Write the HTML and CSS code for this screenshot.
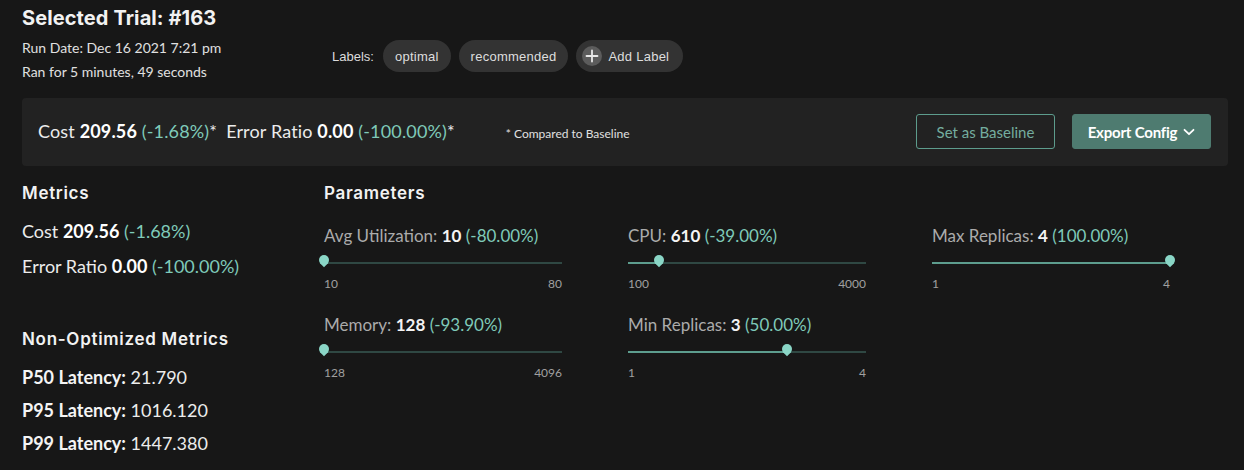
FILE: index.html
```html
<!DOCTYPE html>
<html lang="en">
<head>
<meta charset="utf-8">
<title>Selected Trial</title>
<link rel="stylesheet" href="styles.css">
</head>
<body>
<div class="page">
  <h1 class="title">Selected Trial: #163</h1>
  <div class="top-row">
    <div class="meta">
      <div class="meta-line">Run Date: Dec 16 2021 7:21 pm</div>
      <div class="meta-line">Ran for 5 minutes, 49 seconds</div>
    </div>
    <div class="labels">
      <span class="labels-title">Labels:</span>
      <span class="chip">optimal</span>
      <span class="chip">recommended</span>
      <span class="chip chip-add">
        <span class="plus"><svg width="20" height="20" viewBox="0 0 20 20"><circle cx="10" cy="10" r="10" fill="#5c5c5c"/><path d="M10 4.5v11M4.5 10h11" stroke="#e8e8e8" stroke-width="1.8" stroke-linecap="round"/></svg></span>
        Add Label
      </span>
    </div>
  </div>

  <section class="summary">
    <div class="summary-text">
      <span class="sum-item">Cost <b>209.56</b> <span class="pct">(-1.68%)</span>*</span>
      <span class="sum-item">Error Ratio <b>0.00</b> <span class="pct">(-100.00%)</span>*</span>
      <span class="note">* Compared to Baseline</span>
    </div>
    <div class="actions">
      <button class="btn btn-outline">Set as Baseline</button>
      <button class="btn btn-fill">Export Config <svg class="chev" width="12" height="8" viewBox="0 0 12 8"><path d="M1.5 1.8 6 6.2 10.5 1.8" fill="none" stroke="#fff" stroke-width="1.8" stroke-linecap="round" stroke-linejoin="round"/></svg></button>
    </div>
  </section>

  <div class="content">
    <div class="metrics-col">
      <h2 class="heading">Metrics</h2>
      <div class="metric first">Cost <b>209.56</b> <span class="pct">(-1.68%)</span></div>
      <div class="metric">Error Ratio <b>0.00</b> <span class="pct">(-100.00%)</span></div>

      <h2 class="heading nonopt">Non-Optimized Metrics</h2>
      <div class="lat first"><b>P50 Latency:</b> 21.790</div>
      <div class="lat"><b>P95 Latency:</b> 1016.120</div>
      <div class="lat"><b>P99 Latency:</b> 1447.380</div>
    </div>

    <div class="params-col">
      <h2 class="heading">Parameters</h2>
      <div class="param-grid">
        <div class="param">
          <div class="param-label">Avg Utilization: <span class="val">10</span> <span class="pct">(-80.00%)</span></div>
          <div class="slider"><div class="track"><div class="fill" style="width:0%"></div></div><span class="thumb" style="left:0%"></span></div>
          <div class="range"><span>10</span><span>80</span></div>
        </div>
        <div class="param">
          <div class="param-label">CPU: <span class="val">610</span> <span class="pct">(-39.00%)</span></div>
          <div class="slider"><div class="track"><div class="fill" style="width:13.08%"></div></div><span class="thumb" style="left:13.08%"></span></div>
          <div class="range"><span>100</span><span>4000</span></div>
        </div>
        <div class="param">
          <div class="param-label">Max Replicas: <span class="val">4</span> <span class="pct">(100.00%)</span></div>
          <div class="slider"><div class="track"><div class="fill" style="width:100%"></div></div><span class="thumb" style="left:100%"></span></div>
          <div class="range"><span>1</span><span>4</span></div>
        </div>
        <div class="param">
          <div class="param-label">Memory: <span class="val">128</span> <span class="pct">(-93.90%)</span></div>
          <div class="slider"><div class="track"><div class="fill" style="width:0%"></div></div><span class="thumb" style="left:0%"></span></div>
          <div class="range"><span>128</span><span>4096</span></div>
        </div>
        <div class="param">
          <div class="param-label">Min Replicas: <span class="val">3</span> <span class="pct">(50.00%)</span></div>
          <div class="slider"><div class="track"><div class="fill" style="width:66.67%"></div></div><span class="thumb" style="left:66.67%"></span></div>
          <div class="range"><span>1</span><span>4</span></div>
        </div>
      </div>
    </div>
  </div>
</div>
</body>
</html>
```

FILE: styles.css
```css
* { box-sizing: border-box; }
html, body { margin: 0; padding: 0; background: #171717; }
body {
  font-family: "Lato", "Liberation Sans", sans-serif;
  color: #e6e6e6;
  width: 1244px;
  height: 470px;
  overflow: hidden;
}
.page { padding: 6px 16px 0 22px; }

.title {
  margin: 0;
  font-family: "Inter", "Open Sans", sans-serif;
  font-weight: 700;
  font-size: 20px;
  line-height: 24px;
  color: #f2f2f2;
  letter-spacing: 0.1px;
}

.top-row { display: flex; align-items: flex-start; margin-top: 6px; }
.meta { width: 310px; flex-shrink: 0; }
.meta-line { font-size: 14px; line-height: 24px; color: #e0e0e0; }

.labels {
  display: flex;
  align-items: center;
  gap: 8px;
  margin-top: 4px;
  font-family: "Liberation Sans", Arial, sans-serif;
  font-size: 13px;
  color: #dcdcdc;
}
.labels-title { margin-right: 1px; }
.chip {
  display: inline-flex;
  align-items: center;
  height: 32px;
  padding: 0 12px;
  border-radius: 16px;
  background: #333333;
  color: #dedede;
  letter-spacing: 0.25px;
}
.chip-add { padding-left: 6px; padding-right: 14px; gap: 6px; }
.plus { display: inline-flex; }

.summary {
  margin-top: 14px;
  height: 68px;
  background: #222222;
  border-radius: 4px;
  display: flex;
  align-items: center;
  justify-content: space-between;
  padding: 0 17px 0 16px;
}
.summary-text {
  display: flex;
  align-items: baseline;
  font-size: 18px;
  letter-spacing: 0.15px;
  color: #ececec;
  margin-top: -3px;
}
.summary-text b { font-weight: 700; color: #fff; }
.sum-item { margin-right: 9px; }
.note { margin-left: 42px; font-size: 12px; letter-spacing: 0; color: #e0e0e0; }
.pct { color: #7fcab9; }

.actions { display: flex; gap: 17px; margin-top: -1px; }
.btn {
  height: 35px;
  width: 139px;
  border-radius: 3px;
  font-family: "Lato", sans-serif;
  font-size: 15px;
  display: inline-flex;
  align-items: center;
  justify-content: center;
  gap: 6px;
  cursor: pointer;
}
.btn-outline { background: transparent; border: 1px solid #5d9c8d; color: #74ad9f; }
.btn-fill { background: #4e7b70; border: 1px solid #4e7b70; color: #fff; font-weight: 700; letter-spacing: -0.2px; }
.chev { margin-top: 1px; }

.content { display: flex; margin-top: 17px; }
.metrics-col { width: 302px; flex-shrink: 0; }
.params-col { flex: 1; }
.heading {
  margin: 0;
  font-family: "Inter", "Open Sans", sans-serif;
  font-weight: 600;
  font-size: 17px;
  line-height: 20px;
  letter-spacing: 0.7px;
  color: #f2f2f2;
}
.metric { font-size: 18px; line-height: 24px; color: #ececec; margin-top: 11px; }
.metric.first { margin-top: 16px; }
.metric b { font-weight: 700; color: #fff; }

.nonopt { margin-top: 51px; }
.lat { font-size: 18px; line-height: 24px; color: #ececec; margin-top: 9px; }
.lat.first { margin-top: 16px; }
.lat b { font-weight: 700; color: #f4f4f4; }

.param-grid {
  display: grid;
  grid-template-columns: 304px 304px auto;
  row-gap: 24px;
  margin-top: 23px;
}
.param { width: 238px; }
.param-label { font-size: 17px; line-height: 20px; color: #ababab; white-space: nowrap; }
.param-label .val { color: #f4f4f4; font-weight: 700; }
.slider { position: relative; height: 16px; margin-top: 8px; }
.track { position: absolute; left: 0; right: 0; top: 8px; height: 2px; background: #2f4843; }
.fill { height: 100%; background: #5d9d8e; }
.thumb {
  position: absolute;
  top: 1px;
  width: 10px;
  height: 10px;
  margin-left: -5px;
  background: #8ad6c6;
  border-radius: 50%;
}
.thumb::after {
  content: "";
  position: absolute;
  left: 2px;
  top: 5px;
  width: 6px;
  height: 6px;
  background: #8ad6c6;
  transform: rotate(45deg);
}
.range {
  display: flex;
  justify-content: space-between;
  font-size: 12px;
  line-height: 14px;
  margin-top: 7px;
  color: #a0a0a0;
}
```
